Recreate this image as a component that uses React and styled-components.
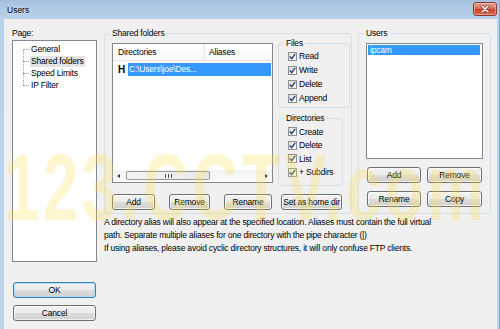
import React from "react";
import styled, { createGlobalStyle } from "styled-components";

const GlobalStyle = createGlobalStyle`
  html, body { margin: 0; padding: 0; }
  body {
    font-family: "Liberation Sans", Arial, sans-serif;
    font-size: 8.5px;
    letter-spacing: -0.2px;
    color: #000;
    background: #bcd4ec;
  }
`;

const Frame = styled.div`
  position: relative;
  width: 500px;
  height: 329px;
  overflow: hidden;
  box-sizing: border-box;
  display: flex;
  flex-direction: column;
  background: linear-gradient(#a6c1e0, #b9d2ec 19px, #bcd4ec);
  border-right: 1px solid #8ea9c9;
`;

const TitleBar = styled.div`
  height: 19px;
  display: flex;
  align-items: center;
  justify-content: space-between;
  padding: 0 2px 0 7px;
`;

const Title = styled.div`
  font-size: 8.5px;
  line-height: 10px;
  margin-top: 1px;
  letter-spacing: 0;
  text-shadow: 0 0 4px rgba(255, 255, 255, 0.9);
`;

const CloseButton = styled.div`
  width: 24px;
  height: 14px;
  margin-top: -1px;
  box-sizing: border-box;
  border: 1px solid #8c3a2b;
  border-radius: 3px;
  background: linear-gradient(#e9a797, #d66d57 45%, #c8452b 55%, #d4674c);
  box-shadow: inset 0 0 0 1px rgba(255, 210, 200, 0.5);
  display: flex;
  align-items: center;
  justify-content: center;
`;

const Client = styled.div`
  flex: 1;
  margin: 0 2px 0 4px;
  background: #f0f0f0;
  display: flex;
  padding: 9px 0 0 8px;
`;

const LeftColumn = styled.div`
  width: 85px;
  display: flex;
  flex-direction: column;
`;

const FieldLabel = styled.div`
  line-height: 11px;
  height: 11px;
`;

const Tree = styled.div`
  margin-top: 1px;
  height: 222px;
  box-sizing: border-box;
  border: 1px solid #828790;
  background: #fff;
  padding-top: 2px;
`;

const TreeList = styled.div`
  position: relative;
  &::before {
    content: "";
    position: absolute;
    left: 10px;
    top: 6px;
    bottom: 6px;
    border-left: 1px dotted #a0a0a0;
  }
`;

const TreeItem = styled.div`
  position: relative;
  height: 12px;
  line-height: 12px;
  padding-left: 17px;
  &::before {
    content: "";
    position: absolute;
    left: 10px;
    top: 6px;
    width: 6px;
    border-top: 1px dotted #a0a0a0;
  }
  span {
    display: inline-block;
    padding: 0 2px 0 1px;
    line-height: 11px;
    background: ${(p) => (p.$selected ? "#e3e3e3" : "transparent")};
  }
`;

const Button = styled.div`
  width: ${(p) => p.$w}px;
  height: 16px;
  margin-left: ${(p) => p.$ml || 0}px;
  margin-top: ${(p) => p.$mt || 0}px;
  box-sizing: border-box;
  border: 1px solid ${(p) => (p.$default ? "#3c7fb1" : "#707070")};
  border-radius: 3px;
  background: linear-gradient(#f2f2f2, #ebebeb 48%, #dddddd 52%, #cfcfcf);
  box-shadow: inset 0 0 0 1px ${(p) => (p.$default ? "#aee0f9" : "rgba(255,255,255,0.7)")};
  display: flex;
  align-items: center;
  justify-content: center;
  line-height: 14px;
  white-space: nowrap;
`;

const RightColumn = styled.div`
  margin-left: 7px;
  width: 387px;
  display: flex;
  flex-direction: column;
`;

const GroupRow = styled.div`
  margin-top: 5px;
  display: flex;
  gap: 6px;
`;

const Group = styled.div`
  position: relative;
  box-sizing: border-box;
  width: ${(p) => p.$w}px;
  height: ${(p) => p.$h}px;
  margin-top: ${(p) => p.$mt || 0}px;
  border: 1px solid #d5dfe5;
  border-radius: 3px;
  padding: ${(p) => p.$pad};
`;

const Caption = styled.span`
  position: absolute;
  top: -6px;
  left: ${(p) => p.$left || 5}px;
  padding: 0 2px;
  line-height: 11px;
  background: #f0f0f0;
`;

const SharedTop = styled.div`
  display: flex;
  align-items: flex-start;
`;

const ListView = styled.div`
  width: 161px;
  height: 140px;
  box-sizing: border-box;
  border: 1px solid #828790;
  background: #fff;
  display: flex;
  flex-direction: column;
`;

const Header = styled.div`
  height: 16px;
  display: flex;
  border-bottom: 1px solid #e5e5e5;
  background: linear-gradient(#ffffff, #f7f8f9);
`;

const HeaderCell = styled.div`
  width: ${(p) => p.$w}px;
  padding-left: ${(p) => p.$pl}px;
  box-sizing: border-box;
  line-height: 17px;
  border-right: ${(p) => (p.$sep ? "1px solid #e5e5e5" : "none")};
`;

const DirRow = styled.div`
  margin-top: 2px;
  height: 13px;
  display: flex;
  align-items: center;
`;

const Flag = styled.div`
  width: 15px;
  padding-left: 5px;
  box-sizing: border-box;
  font-weight: bold;
  font-size: 10px;
  line-height: 13px;
`;

const Selected = styled.div`
  flex: 1;
  height: 13px;
  line-height: 13px;
  padding-left: 1px;
  background: #3399ff;
  color: #fff;
  margin-right: 1px;
  white-space: nowrap;
`;

const Spacer = styled.div`
  flex: 1;
`;

const HScroll = styled.div`
  height: 11px;
  display: flex;
  align-items: center;
  padding: 0 4px 1px 4px;
  background: linear-gradient(#f3f3f3, #fafafa);
`;

const Arrow = styled.div`
  width: 0;
  height: 0;
  border-top: 2.5px solid transparent;
  border-bottom: 2.5px solid transparent;
  ${(p) => (p.$dir === "left" ? "border-right: 3px solid #3a3a3a;" : "border-left: 3px solid #3a3a3a;")}
`;

const Thumb = styled.div`
  width: 84px;
  height: 9px;
  margin-left: 6px;
  box-sizing: border-box;
  border: 1px solid #979797;
  border-radius: 2px;
  background: linear-gradient(90deg, #f4f4f4, #e9e9e9);
  display: flex;
  align-items: center;
  justify-content: center;
  &::after {
    content: "";
    width: 7px;
    height: 4px;
    background: repeating-linear-gradient(90deg, #505050 0 1px, transparent 1px 3px);
  }
`;

const SideColumn = styled.div`
  margin-left: 5px;
  display: flex;
  flex-direction: column;
`;

const CheckRow = styled.div`
  height: ${(p) => p.$h}px;
  display: flex;
  align-items: center;
  white-space: nowrap;
`;

const Box = styled.div`
  width: 9px;
  height: 9px;
  box-sizing: border-box;
  border: 1px solid #8e8f8f;
  background: linear-gradient(135deg, #dcdcdc, #ffffff);
  margin-right: 2px;
  display: flex;
  align-items: center;
  justify-content: center;
`;

const ButtonRow = styled.div`
  margin-top: 8px;
  display: flex;
`;

const ListBox = styled.div`
  width: 117px;
  height: 116px;
  box-sizing: border-box;
  border: 1px solid #828790;
  background: #fff;
  padding: 1px 2px 0 1px;
`;

const ListItem = styled.div`
  height: 10px;
  line-height: 10px;
  padding-left: 2px;
  background: ${(p) => (p.$selected ? "#3399ff" : "transparent")};
  color: ${(p) => (p.$selected ? "#fff" : "#000")};
`;

const UserButtons = styled.div`
  margin-top: 8px;
  margin-left: 1px;
  display: grid;
  grid-template-columns: 54px 55px;
  column-gap: 6px;
  row-gap: 8px;
`;

const HelpText = styled.div`
  margin-top: ${(p) => p.$mt || 0}px;
  line-height: 13px;
  white-space: nowrap;
`;

const Watermark = styled.div`
  position: absolute;
  left: 4px;
  top: 138px;
  font-family: "Liberation Sans", Arial, sans-serif;
  font-weight: bold;
  font-size: 94px;
  letter-spacing: 6px;
  line-height: 100px;
  white-space: nowrap;
  color: rgba(250, 222, 80, 0.28);
  transform: scaleX(0.67);
  transform-origin: left top;
  pointer-events: none;
`;

const Check = () => (
  <svg width="7" height="7" viewBox="0 0 7 7">
    <path d="M0.8 3.6 L2.7 5.6 L6.2 0.9" fill="none" stroke="#263e7a" strokeWidth="1.4" />
  </svg>
);

const Checkbox = ({ label, h }) => (
  <CheckRow $h={h}>
    <Box>
      <Check />
    </Box>
    {label}
  </CheckRow>
);

export default function App() {
  return (
    <>
      <GlobalStyle />
      <Frame>
        <TitleBar>
          <Title>Users</Title>
          <CloseButton>
            <svg width="10" height="8" viewBox="0 0 10 8">
              <path d="M2 1 L8 7 M8 1 L2 7" stroke="#6b2418" strokeWidth="2.6" strokeLinecap="round" />
              <path d="M2 1 L8 7 M8 1 L2 7" stroke="#fff" strokeWidth="1.6" strokeLinecap="round" />
            </svg>
          </CloseButton>
        </TitleBar>
        <Client>
          <LeftColumn>
            <FieldLabel>Page:</FieldLabel>
            <Tree>
              <TreeList>
                <TreeItem><span>General</span></TreeItem>
                <TreeItem $selected><span>Shared folders</span></TreeItem>
                <TreeItem><span>Speed Limits</span></TreeItem>
                <TreeItem><span>IP Filter</span></TreeItem>
              </TreeList>
            </Tree>
            <Button $w={83} $ml={1} $mt={20} $default>OK</Button>
            <Button $w={83} $ml={1} $mt={7}>Cancel</Button>
          </LeftColumn>
          <RightColumn>
            <GroupRow>
              <Group $w={248} $h={181} $pad="9px 0 0 7px">
                <Caption>Shared folders</Caption>
                <SharedTop>
                  <ListView>
                    <Header>
                      <HeaderCell $w={92} $pl={5} $sep>Directories</HeaderCell>
                      <HeaderCell $w={60} $pl={4}>Aliases</HeaderCell>
                    </Header>
                    <DirRow>
                      <Flag>H</Flag>
                      <Selected>C:\Users\joe\Des...</Selected>
                    </DirRow>
                    <Spacer />
                    <HScroll>
                      <Arrow $dir="left" />
                      <Thumb />
                      <Spacer />
                      <Arrow $dir="right" />
                    </HScroll>
                  </ListView>
                  <SideColumn>
                    <Group $w={72} $h={65} $pad="5px 0 0 9px">
                      <Caption>Files</Caption>
                      <Checkbox h={14} label="Read" />
                      <Checkbox h={14} label="Write" />
                      <Checkbox h={14} label="Delete" />
                      <Checkbox h={14} label="Append" />
                    </Group>
                    <Group $w={65} $h={68} $mt={10} $pad="6px 0 0 9px">
                      <Caption>Directories</Caption>
                      <Checkbox h={13.5} label="Create" />
                      <Checkbox h={13.5} label="Delete" />
                      <Checkbox h={13.5} label="List" />
                      <Checkbox h={13.5} label="+ Subdirs" />
                    </Group>
                  </SideColumn>
                </SharedTop>
                <ButtonRow>
                  <Button $w={43}>Add</Button>
                  <Button $w={41} $ml={14}>Remove</Button>
                  <Button $w={48} $ml={14}>Rename</Button>
                  <Button $w={61} $ml={9}>Set as home dir</Button>
                </ButtonRow>
              </Group>
              <Group $w={133} $h={181} $pad="9px 0 0 7px">
                <Caption>Users</Caption>
                <ListBox>
                  <ListItem $selected>ipcam</ListItem>
                </ListBox>
                <UserButtons>
                  <Button $w={54}>Add</Button>
                  <Button $w={55}>Remove</Button>
                  <Button $w={54}>Rename</Button>
                  <Button $w={55}>Copy</Button>
                </UserButtons>
              </Group>
            </GroupRow>
            <HelpText $mt={2}>
              A directory alias will also appear at the specified location. Aliases must contain the full virtual
              <br />
              path. Separate multiple aliases for one directory with the pipe character (|)
            </HelpText>
            <HelpText>
              If using aliases, please avoid cyclic directory structures, it will only confuse FTP clients.
            </HelpText>
          </RightColumn>
        </Client>
        <Watermark>123.CCTV.com</Watermark>
      </Frame>
    </>
  );
}
